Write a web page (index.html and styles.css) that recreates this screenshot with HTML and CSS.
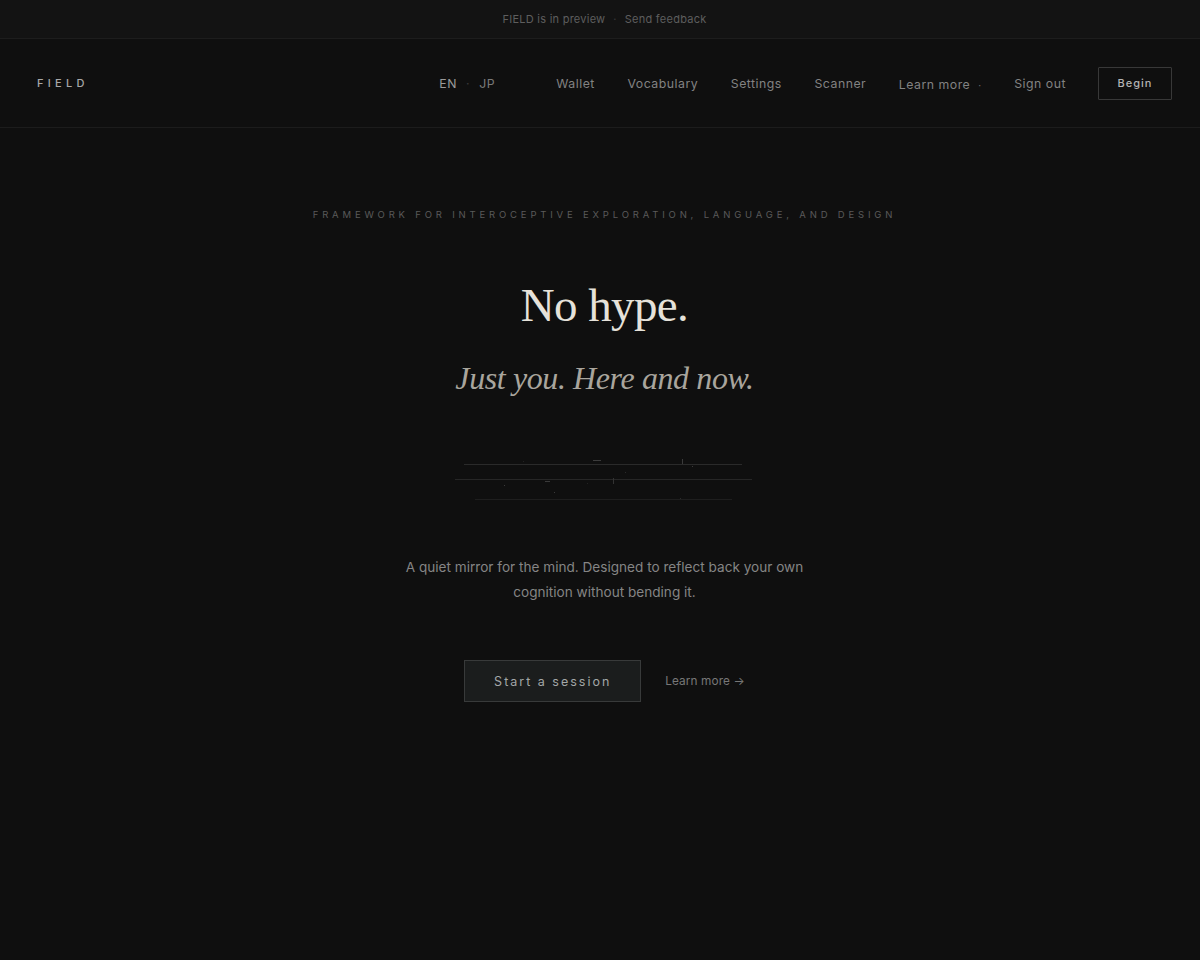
FILE: index.html
```html
<!DOCTYPE html>
<html lang="en">
<head>
<meta charset="utf-8">
<title>FIELD</title>
<link rel="stylesheet" href="styles.css">
</head>
<body>
<div class="banner">
  <span>FIELD is in preview</span>
  <span class="sep">·</span>
  <a class="banner-link" href="#">Send feedback</a>
</div>
<header class="header">
  <div class="logo">FIELD</div>
  <nav class="nav">
    <div class="lang">
      <span class="lang-active">EN</span>
      <span class="lang-sep">·</span>
      <span>JP</span>
    </div>
    <div class="links">
      <a href="#">Wallet</a>
      <a href="#">Vocabulary</a>
      <a href="#">Settings</a>
      <a href="#">Scanner</a>
      <a href="#" class="more">Learn more <span class="caret">·</span></a>
      <a href="#">Sign out</a>
    </div>
    <a href="#" class="begin">Begin</a>
  </nav>
</header>
<main class="hero">
  <p class="eyebrow">FRAMEWORK FOR INTEROCEPTIVE EXPLORATION, LANGUAGE, AND DESIGN</p>
  <h1 class="title">No hype.</h1>
  <p class="subtitle">Just you. Here and now.</p>
  <svg class="field-lines" width="300" height="50" viewBox="0 0 300 50" aria-hidden="true">
    <g stroke-linecap="butt">
      <line x1="9" y1="14.5" x2="287" y2="14.5" stroke="#2a2a2a" stroke-width="1"/>
      <line x1="0" y1="29.5" x2="297" y2="29.5" stroke="#262626" stroke-width="1"/>
      <line x1="20" y1="49.5" x2="277" y2="49.5" stroke="#1e1e1e" stroke-width="1"/>
      <line x1="138" y1="10.5" x2="146" y2="10.5" stroke="#3c3c3c" stroke-width="1"/>
      <line x1="227.5" y1="9" x2="227.5" y2="14" stroke="#3a3a3a" stroke-width="1"/>
      <line x1="90" y1="31.5" x2="95" y2="31.5" stroke="#3a3a3a" stroke-width="1"/>
      <line x1="158.5" y1="28" x2="158.5" y2="34" stroke="#333" stroke-width="1"/>
      <rect x="237" y="16" width="1" height="1" fill="#3a3a3a"/>
      <rect x="49" y="35" width="1" height="1" fill="#3a3a3a"/>
      <rect x="99" y="42" width="1" height="1" fill="#3a3a3a"/>
      <rect x="68" y="11" width="1" height="1" fill="#222"/>
      <rect x="170" y="22" width="1" height="1" fill="#2a2a2a"/>
      <rect x="132" y="33" width="1" height="1" fill="#222"/>
      <rect x="225" y="48" width="1" height="1" fill="#2a2a2a"/>
    </g>
  </svg>
  <p class="lead">A quiet mirror for the mind. Designed to reflect back your own<br>cognition without bending it.</p>
  <div class="actions">
    <a href="#" class="start">Start a session</a>
    <a href="#" class="learn">Learn more →</a>
  </div>
</main>
</body>
</html>
```

FILE: styles.css
```css
* { box-sizing: border-box; }
html, body { margin: 0; padding: 0; }
body {
  background: #0f0f0f;
  color: #8a8a8a;
  font-family: Inter, "Noto Sans", "Liberation Sans", sans-serif;
  min-height: 960px;
}
a { color: inherit; text-decoration: none; }

.banner {
  height: 39px;
  background: #131313;
  border-bottom: 1px solid #1d1d1d;
  display: flex;
  align-items: center;
  justify-content: center;
  gap: 8px;
  padding-left: 9px;
  font-size: 11px;
  color: #5e5e5e;
  letter-spacing: 0.25px;
}
.banner .sep { color: #3a3a3a; }

.header {
  height: 89px;
  border-bottom: 1px solid #1c1c1c;
  display: flex;
  align-items: center;
  justify-content: space-between;
  padding: 0 28px 0 37px;
}
.logo {
  font-size: 11px;
  letter-spacing: 4.3px;
  color: #a8a8a8;
  font-weight: 500;
}
.nav {
  display: flex;
  align-items: center;
}
.lang {
  display: flex;
  align-items: center;
  gap: 9px;
  font-size: 12.3px;
  letter-spacing: 0.6px;
  color: #7a7a7a;
  margin-right: 61px;
}
.lang-active { color: #9a9a9a; }
.lang-sep { color: #3a3a3a; }
.links {
  display: flex;
  align-items: center;
  gap: 32.6px;
  font-size: 12.3px;
  letter-spacing: 0.5px;
  color: #828282;
  margin-right: 32px;
}
.more { padding-top: 3px; }
.caret { font-size: 10px; margin-left: 4px; color: #6a6a6a; }
.begin {
  display: flex;
  align-items: center;
  justify-content: center;
  width: 74px;
  height: 33px;
  border: 1px solid #383838;
  border-radius: 1px;
  font-size: 11px;
  letter-spacing: 1px;
  color: #b4b4b4;
  font-weight: 500;
}

.hero {
  display: flex;
  flex-direction: column;
  align-items: center;
  padding-top: 80px;
  padding-left: 9px;
}
.eyebrow {
  margin: 0;
  font-size: 9.5px;
  letter-spacing: 3.82px;
  color: #5a5a5a;
  line-height: 14px;
}
.title {
  margin: 53px 0 0;
  font-family: "Liberation Serif", "DejaVu Serif", serif;
  font-weight: 400;
  font-size: 47px;
  line-height: 60px;
  color: #e6e2da;
  letter-spacing: -0.6px;
}
.subtitle {
  margin: 21px 0 0;
  font-family: "Liberation Serif", "DejaVu Serif", serif;
  font-style: italic;
  font-size: 32px;
  line-height: 44px;
  color: #a9a59d;
  letter-spacing: -0.4px;
}
.field-lines {
  display: block;
  margin-top: 50px;
}
.lead {
  margin: 55px 0 0;
  font-size: 13.6px;
  line-height: 25px;
  color: #858585;
  text-align: center;
}
.actions {
  margin-top: 55px;
  display: flex;
  align-items: center;
  gap: 24px;
}
.start {
  display: flex;
  align-items: center;
  justify-content: center;
  width: 177px;
  height: 42px;
  background: #1b1d1d;
  border: 1px solid #383a3a;
  font-size: 12.5px;
  letter-spacing: 2px;
  color: #a3a7a7;
}
.learn {
  font-size: 11.8px;
  color: #777;
  letter-spacing: 0.1px;
}
```
